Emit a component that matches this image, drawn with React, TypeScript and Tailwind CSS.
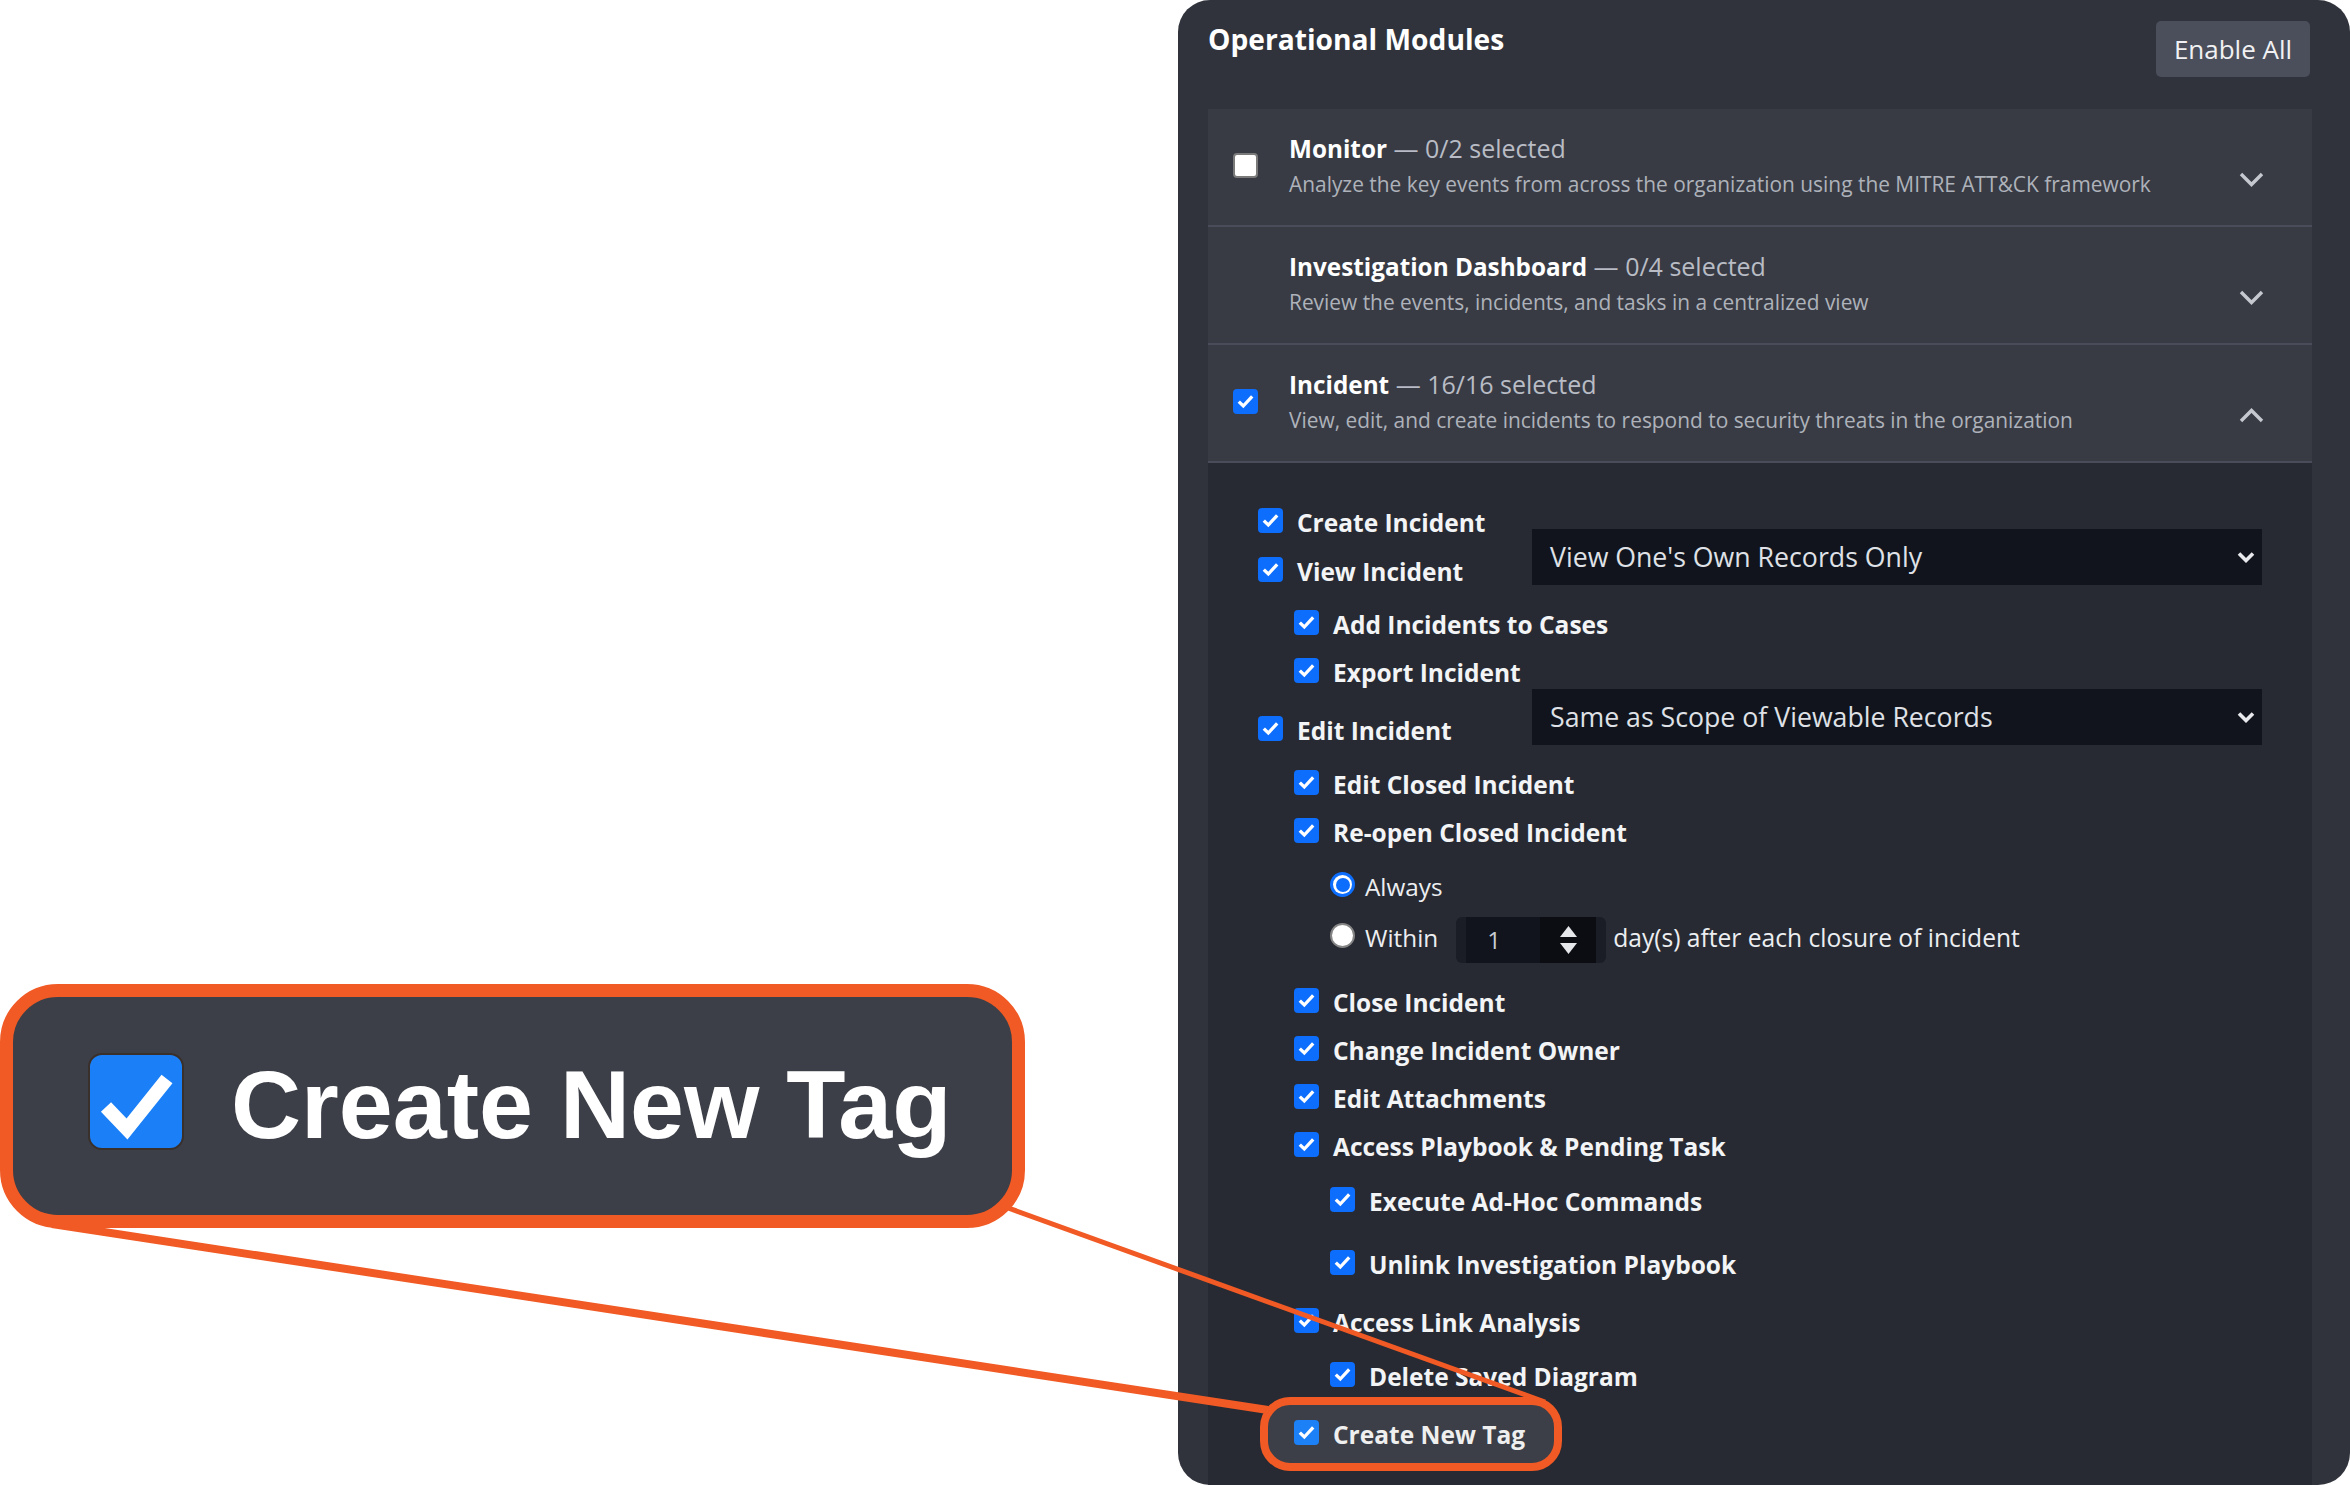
import React from "react";

function CheckOn({ cls = "bg-[#0d6efd]" }: { cls?: string }) {
  return (
    <span className={`flex h-[25px] w-[25px] shrink-0 items-center justify-center rounded-[4px] ${cls}`}>
      <svg width="25" height="25" viewBox="0 0 25 25">
        <polyline points="5.8,12.6 10.3,17 19.2,7.4" fill="none" stroke="white" strokeWidth="3.3" />
      </svg>
    </span>
  );
}

function CheckOff() {
  return <span className="block h-[25px] w-[25px] shrink-0 rounded-[4px] border-[2px] border-[#7a7a7a] bg-white" />;
}

function Chevron({ up = false }: { up?: boolean }) {
  return (
    <svg width="25" height="15" viewBox="0 0 25 15" className="shrink-0">
      <polyline
        points={up ? "2,13 12.5,2.5 23,13" : "2,2 12.5,12.5 23,2"}
        fill="none"
        stroke="#c5c8cf"
        strokeWidth="3.4"
      />
    </svg>
  );
}

function ModuleRow({
  title,
  count,
  desc,
  check,
  open = false,
}: {
  title: string;
  count: string;
  desc: string;
  check: "none" | "off" | "on";
  open?: boolean;
}) {
  return (
    <div className="flex h-[118px] items-start border-b-2 border-[#4a4d59] bg-[#383b44] pl-[25px] pr-[48px]">
      <div className="mt-[44px] w-[25px] shrink-0">
        {check === "off" && <CheckOff />}
        {check === "on" && <CheckOn />}
      </div>
      <div className="ml-[31px] flex-1 pt-[23px]">
        <div className="h-[32px] text-[25px] leading-[32px] whitespace-nowrap">
          <span className="text-[24.3px] font-bold text-white">{title}</span>
          <span className="text-[#b9bcc4]"> — {count}</span>
        </div>
        <div className="mt-[5px] h-[30px] text-[20.9px] leading-[30px] text-[#aeb2ba] whitespace-nowrap">{desc}</div>
      </div>
      <div className="mt-[63px]">
        <Chevron up={open} />
      </div>
    </div>
  );
}

function Item({ label, cls }: { label: string; cls: string }) {
  return (
    <div className={`flex h-[25px] items-start ${cls}`}>
      <CheckOn />
      <span className="ml-[14px] text-[24.5px] font-bold leading-[29px] whitespace-nowrap text-[#f3f4f6]">{label}</span>
    </div>
  );
}

function Select({ text }: { text: string }) {
  return (
    <div className="flex h-[56px] w-[730px] shrink-0 items-center bg-[#11141d] pl-[18px] pr-[7px]">
      <span className="text-[26.7px] text-[#dfe1e6] whitespace-nowrap">{text}</span>
      <svg width="18" height="12" viewBox="0 0 18 12" className="ml-auto">
        <polyline points="2,2.5 9,9.5 16,2.5" fill="none" stroke="#e8e9ec" strokeWidth="3.6" />
      </svg>
    </div>
  );
}

function RadioOn() {
  return (
    <span className="flex h-[25px] w-[25px] shrink-0 items-center justify-center rounded-full bg-[#0d6efd]">
      <span className="flex h-[19px] w-[19px] items-center justify-center rounded-full bg-white">
        <span className="block h-[14px] w-[14px] rounded-full bg-[#0d6efd]" />
      </span>
    </span>
  );
}

function RadioOff() {
  return <span className="block h-[25px] w-[25px] shrink-0 rounded-full border-[2px] border-[#858585] bg-white" />;
}

export default function App() {
  const after = [
    { label: "Close Incident", cls: "mt-[40px] pl-[36px]" },
    { label: "Change Incident Owner", cls: "mt-[23px] pl-[36px]" },
    { label: "Edit Attachments", cls: "mt-[23px] pl-[36px]" },
    { label: "Access Playbook & Pending Task", cls: "mt-[23px] pl-[36px]" },
    { label: "Execute Ad-Hoc Commands", cls: "mt-[30px] pl-[72px]" },
    { label: "Unlink Investigation Playbook", cls: "mt-[38px] pl-[72px]" },
    { label: "Access Link Analysis", cls: "mt-[33px] pl-[36px]" },
    { label: "Delete Saved Diagram", cls: "mt-[29px] pl-[72px]" },
    { label: "Create New Tag", cls: "mt-[33px] pl-[36px]" },
  ];

  return (
    <div className="relative flex h-[1485px] w-[2350px] overflow-hidden bg-white font-['Open_Sans',sans-serif]">
      <div className="w-[1178px] shrink-0" />
      <div className="flex h-[1485px] w-[1172px] shrink-0 flex-col overflow-hidden rounded-[32px] bg-[#30333b] pl-[30px] pr-[38px]">
        <div className="flex items-start justify-between pt-[21px]">
          <h2 className="text-[28.2px] font-bold leading-[36px] text-white">Operational Modules</h2>
          <button className="mr-[2px] flex h-[56px] w-[154px] items-center justify-center rounded-[5px] bg-[#4b4f5b] text-[26px] text-[#f1f1f3]">
            Enable All
          </button>
        </div>

        <div className="mt-[32px] flex flex-1 flex-col">
          <ModuleRow
            title="Monitor"
            count="0/2 selected"
            desc="Analyze the key events from across the organization using the MITRE ATT&CK framework"
            check="off"
          />
          <ModuleRow
            title="Investigation Dashboard"
            count="0/4 selected"
            desc="Review the events, incidents, and tasks in a centralized view"
            check="none"
          />
          <ModuleRow
            title="Incident"
            count="16/16 selected"
            desc="View, edit, and create incidents to respond to security threats in the organization"
            check="on"
            open
          />

          <div className="flex flex-1 flex-col bg-[#272a32] pl-[50px] pr-[50px] pt-[45px]">
            <div className="flex items-start">
              <div className="w-[274px] shrink-0">
                <Item label="Create Incident" cls="" />
                <Item label="View Incident" cls="mt-[24px]" />
              </div>
              <div className="mt-[21px]">
                <Select text="View One's Own Records Only" />
              </div>
            </div>
            <Item label="Add Incidents to Cases" cls="mt-[25px] pl-[36px]" />
            <Item label="Export Incident" cls="mt-[23px] pl-[36px]" />
            <div className="mt-[6px] flex items-start">
              <div className="w-[274px] shrink-0 pt-[27px]">
                <Item label="Edit Incident" cls="" />
              </div>
              <Select text="Same as Scope of Viewable Records" />
            </div>
            <Item label="Edit Closed Incident" cls="mt-[25px] pl-[36px]" />
            <Item label="Re-open Closed Incident" cls="mt-[23px] pl-[36px]" />

            <div className="mt-[29px] flex h-[25px] items-start pl-[72px]">
              <RadioOn />
              <span className="ml-[10px] text-[24.3px] leading-[29px] text-[#eceef1]">Always</span>
            </div>
            <div className="mt-[26px] flex h-[25px] items-start pl-[72px]">
              <RadioOff />
              <span className="ml-[10px] text-[24.3px] leading-[29px] text-[#eceef1]">Within</span>
              <div className="ml-[18px] -mt-[6px] flex h-[46px] w-[150px] shrink-0 rounded-[6px] bg-[#1a1d26] px-[10px]">
                <div className="flex w-[74px] items-center bg-[#11141c] pl-[21px] text-[24px] text-[#c9ccd3]">1</div>
                <div className="flex w-[56px] flex-col items-center justify-center gap-[6px] bg-[#0b0d12]">
                  <svg width="17" height="11" viewBox="0 0 17 11">
                    <polygon points="8.5,0 17,11 0,11" fill="#e6e7ea" />
                  </svg>
                  <svg width="17" height="11" viewBox="0 0 17 11">
                    <polygon points="0,0 17,0 8.5,11" fill="#e6e7ea" />
                  </svg>
                </div>
              </div>
              <span className="ml-[7px] text-[24.6px] leading-[29px] whitespace-nowrap text-[#eceef1]">
                day(s) after each closure of incident
              </span>
            </div>

            {after.map((it) => (
              <Item key={it.label} label={it.label} cls={it.cls} />
            ))}
          </div>
        </div>
      </div>

      {/* annotation overlay */}
      <div className="pointer-events-none absolute inset-0">
        <svg width="2350" height="1485" viewBox="0 0 2350 1485" className="absolute left-0 top-0">
          <line x1="52" y1="1224" x2="1268" y2="1410" stroke="#f15a24" strokeWidth="8" />
          <line x1="1000" y1="1205" x2="1545" y2="1402" stroke="#f15a24" strokeWidth="5" />
        </svg>

        <div className="absolute left-[1260px] top-[1397px] flex h-[74px] w-[302px] items-start rounded-[30px] border-[8px] border-[#f15a24] bg-[#3c3f47] pl-[26px] pt-[15px]">
          <CheckOn cls="bg-[#1c80f6]" />
          <span className="ml-[14px] text-[24.5px] font-bold leading-[29px] whitespace-nowrap text-[#efefef]">Create New Tag</span>
        </div>

        <div className="absolute left-0 top-[984px] flex h-[244px] w-[1025px] items-center rounded-[58px] border-[13px] border-[#f15a24] bg-[#3c3f47] pb-[9px] pl-[75px]">
          <span className="flex h-[97px] w-[96px] shrink-0 items-center justify-center rounded-[14px] border-[2px] border-[#3a302b] bg-[#1b80f7]">
            <svg width="92" height="93" viewBox="0 0 92 93">
              <polyline points="16,52 37,74 77,24" fill="none" stroke="white" strokeWidth="14" />
            </svg>
          </span>
          <span className="ml-[47px] mt-[6px] font-['Liberation_Sans',Arial,sans-serif] text-[97px] font-bold leading-[96px] whitespace-nowrap text-white">
            Create New Tag
          </span>
        </div>
      </div>
    </div>
  );
}
